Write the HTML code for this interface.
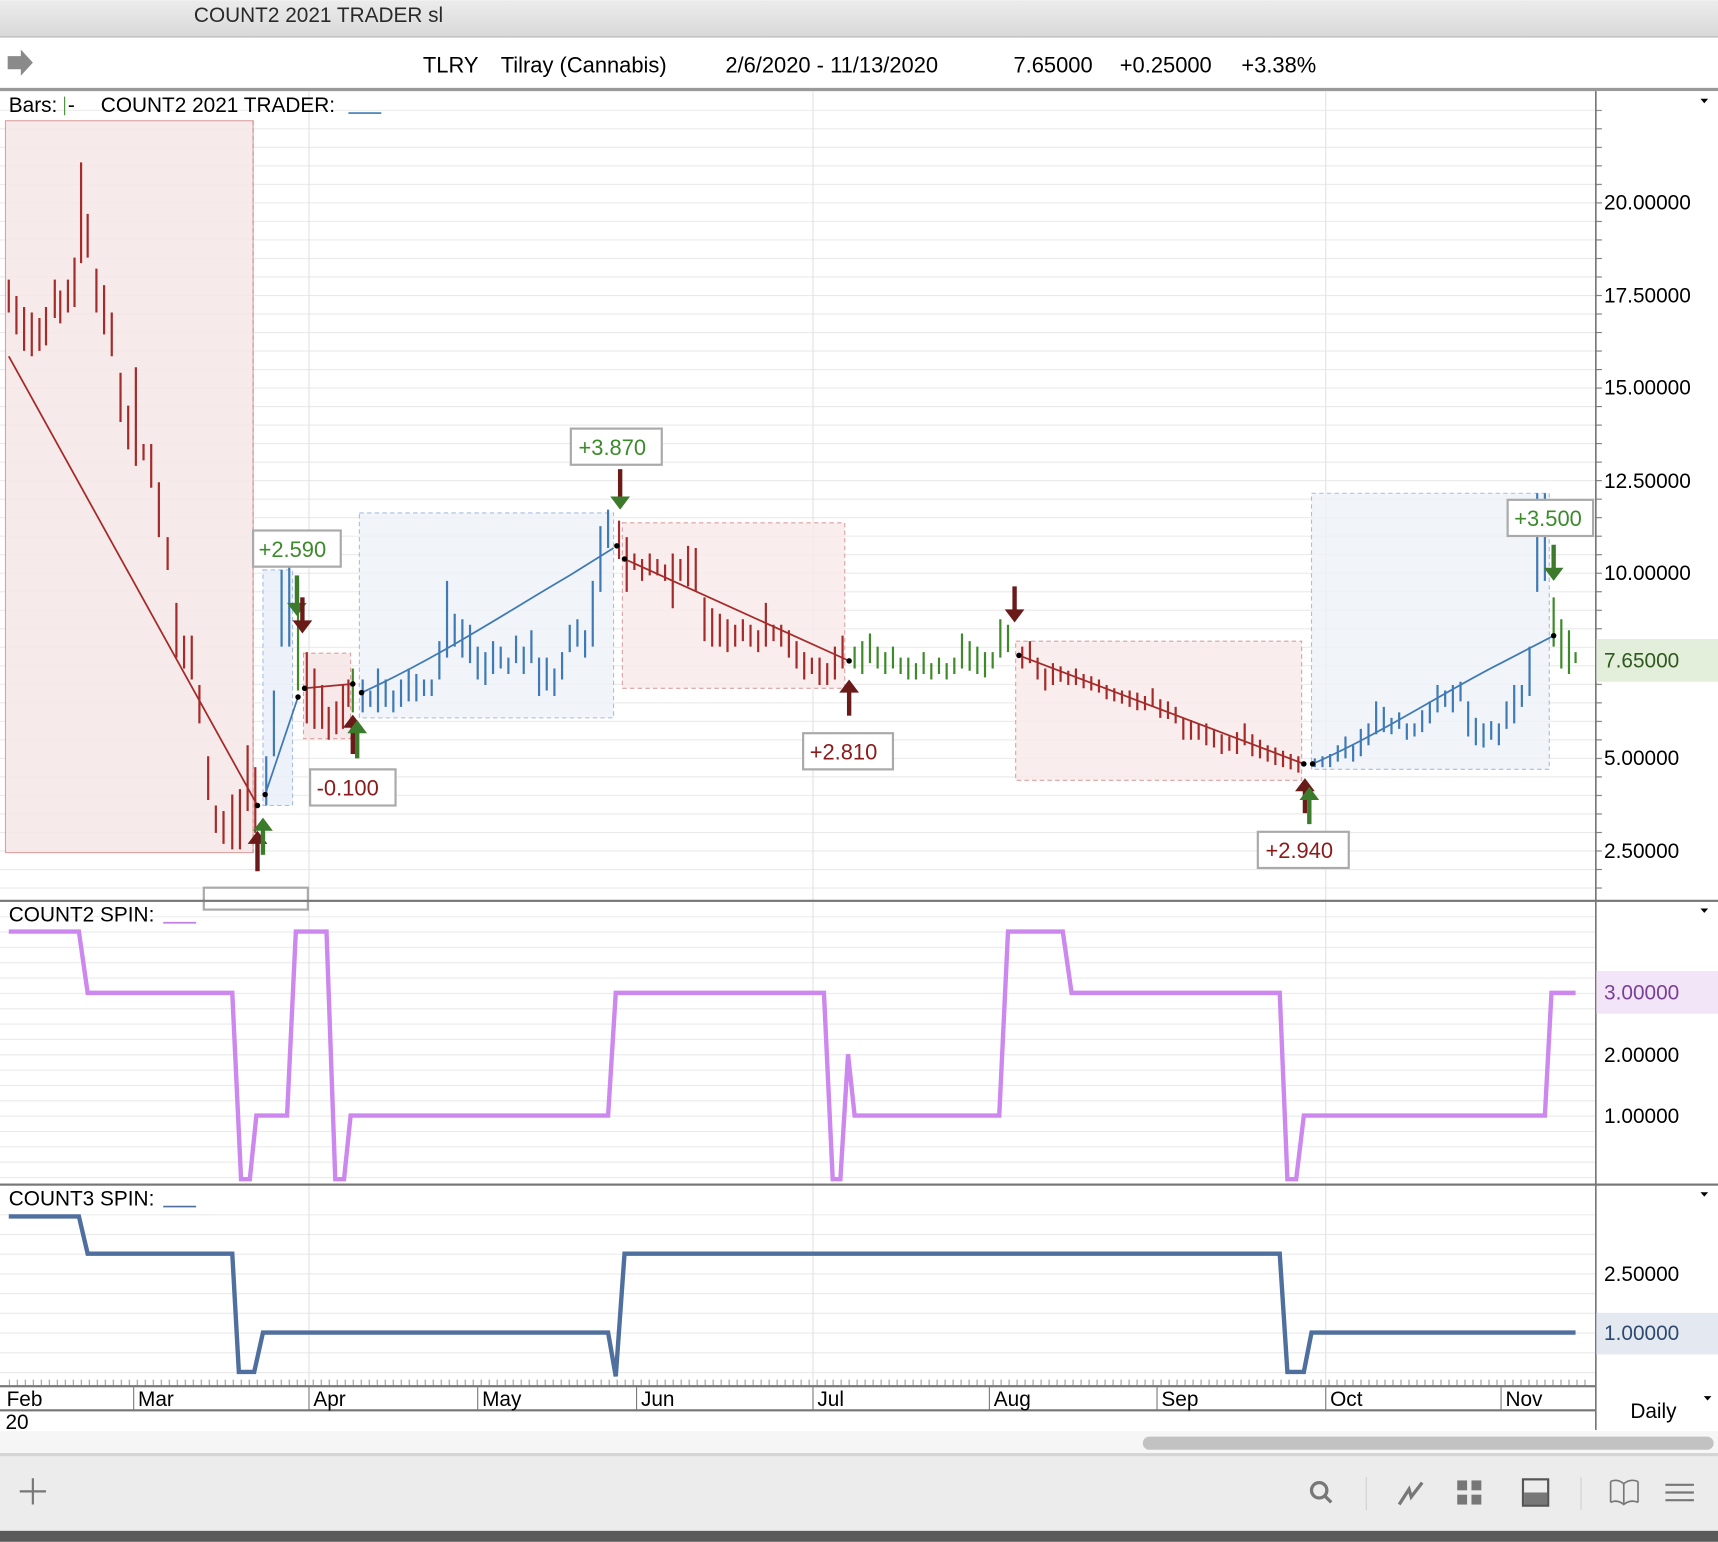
<!DOCTYPE html>
<html><head><meta charset="utf-8"><style>
html,body{margin:0;padding:0;background:#fff;overflow:hidden}
svg{display:block;font-family:"Liberation Sans",Arial,sans-serif}
</style></head><body>
<svg width="1718" height="1542" viewBox="0 0 1568 1407" xmlns="http://www.w3.org/2000/svg">
<defs>
<linearGradient id="tb" x1="0" y1="0" x2="0" y2="1"><stop offset="0" stop-color="#ececec"/><stop offset="1" stop-color="#d9d9d9"/></linearGradient>
<pattern id="g1" x="0" y="100" width="20" height="16.9" patternUnits="userSpaceOnUse"><rect width="20" height="1" fill="#e9e9e9"/></pattern>
<pattern id="g2" x="0" y="836" width="20" height="14" patternUnits="userSpaceOnUse"><rect width="20" height="1" fill="#e9e9e9"/></pattern>
<pattern id="g3" x="0" y="1108" width="20" height="18" patternUnits="userSpaceOnUse"><rect width="20" height="1" fill="#e9e9e9"/></pattern>
<pattern id="t1" x="0" y="100" width="6" height="16.9" patternUnits="userSpaceOnUse"><rect width="6" height="1" fill="#777"/></pattern>
<pattern id="t2" x="8" y="0" width="7.3" height="10" patternUnits="userSpaceOnUse"><rect width="1" height="10" fill="#999"/></pattern>
</defs>
<rect x="0" y="0" width="1568" height="33" fill="url(#tb)"/>
<text x="177" y="20" font-size="19" fill="#2a2a2a">COUNT2 2021 TRADER sl</text>
<line x1="0" y1="33.5" x2="1568" y2="33.5" stroke="#b0b0b0"/>
<path d="M7 51 h12 v-6 l11 12 l-11 12 v-6 h-12z" fill="#8a8a8a"/>
<text y="66" font-size="20" fill="#000"><tspan x="386">TLRY</tspan><tspan x="457">Tilray (Cannabis)</tspan><tspan x="662">2/6/2020 - 11/13/2020</tspan><tspan x="925">7.65000</tspan><tspan x="1022">+0.25000</tspan><tspan x="1133">+3.38%</tspan></text>
<rect x="0" y="80" width="1568" height="3" fill="#999"/>
<rect x="0" y="100" width="1456" height="716" fill="url(#g1)"/>
<rect x="0" y="836" width="1456" height="242" fill="url(#g2)"/>
<rect x="0" y="1108" width="1456" height="155" fill="url(#g3)"/>
<g stroke="#e2e2e2"><line x1="282" y1="83" x2="282" y2="1264"/><line x1="742" y1="83" x2="742" y2="1264"/><line x1="1210" y1="83" x2="1210" y2="1264"/></g>
<g stroke-dasharray="4 3" stroke-width="1">
<rect x="5" y="110" width="226" height="668" fill="#f6e6e6" stroke="#dba0a0" stroke-dasharray="none" fill-opacity="0.85"/>
<line x1="231" y1="110" x2="231" y2="778" stroke="#d08a8a"/>
<rect x="240" y="520" width="27" height="215" fill="#e9eef7" stroke="#a8bde0" fill-opacity="0.8"/>
<rect x="277" y="596" width="43" height="78" fill="#f5e4e4" stroke="#dba0a0" fill-opacity="0.8"/>
<rect x="328" y="468" width="232" height="187" fill="#edf1f8" stroke="#a8bde0" fill-opacity="0.8"/>
<rect x="568" y="477" width="203" height="151" fill="#f7e8e8" stroke="#dba0a0" fill-opacity="0.8"/>
<rect x="927" y="585" width="261" height="127" fill="#f7e8e8" stroke="#dba0a0" fill-opacity="0.8"/>
<rect x="1197" y="450" width="217" height="252" fill="#edf1f8" stroke="#a8bde0" fill-opacity="0.8"/>
</g>
<g fill="none" stroke-width="2">
<path stroke="#a52a2a" d="M8 255V285M15 270V305M22 280V320M29 285V325M36 290V320M42 280V315M50 255V290M55 265V295M62 255V285M68 235V280M74 148V240M80 195V235M88 245V285M95 260V305M102 285V325M110 340V385M117 370V410M124 335V425M131 405V420M138 405V445M145 440V490M153 490V520M161 550V600M168 580V610M175 580V620M182 625V660M190 690V730M197 735V760M204 740V770M212 725V775M219 720V775M226 680V740M233 700V760
M280 595V660M287 610V665M294 625V665M300 645V675M307 640V670M313 625V665M318 620V645
M565 475V510M572 490V540M579 505V520M586 510V530M593 505V525M600 510V525M607 515V530M614 505V555M621 510V530M628 498V535M635 500V540M643 545V585M650 555V590M657 560V590M664 565V595M671 570V590M678 565V585M685 570V590M692 575V595M699 550V590M706 570V585M713 570V590M720 575V600M727 585V610M734 595V620M741 600V615M748 600V625M755 605V625M762 590V620M769 580V610
M933 590V610M940 585V605M947 600V620M954 610V630M961 605V625M968 608V622M975 612V625M982 610V625M989 615V628M996 617V630M1003 620V632M1010 625V638M1017 628V640M1024 630V642M1031 630V645M1038 632V648M1045 635V648M1052 628V645M1059 638V655M1066 640V656M1073 645V660M1080 655V675M1087 657V675M1094 660V675M1101 660V680M1108 665V682M1115 670V688M1122 672V685M1129 668V688M1136 660V680M1143 670V690M1150 675V692M1157 680V695M1164 682V698M1171 685V700M1178 688V702M1185 690V705"/>
<path stroke="#3f7ab5" d="M243 690V735M250 630V690M257 520V590M264 515V590
M331 620V650M338 630V645M345 610V650M352 620V645M359 630V650M366 620V645M373 610V640M380 615V640M387 620V635M394 620V635M401 585V620M408 530V600M415 560V590M422 565V600M429 570V605M436 590V620M443 595V625M450 585V615M457 590V610M464 600V615M471 580V605M478 590V615M485 575V605M492 600V635M499 600V630M506 610V635M513 595V620M520 570V595M527 565V590M534 575V600M541 530V590M548 480V540M555 465V500
M1200 692V700M1207 690V700M1214 688V700M1221 680V695M1228 672V692M1235 680V695M1242 665V690M1249 660V680M1256 640V670M1263 645V668M1270 655V670M1277 650V665M1284 660V675M1291 660V672M1298 648V668M1305 640V660M1312 625V650M1319 630V645M1326 625V650M1333 622V640M1340 640V672M1347 655V680M1354 660V682M1361 658V675M1368 660V680M1375 640V665M1382 625V660M1389 625V645M1396 590V635M1403 450V540M1410 450V530"/>
<path stroke="#3e8a2a" d="M272 530V630M322 610V650
M780 590V610M787 585V615M794 578V605M801 590V610M808 595V615M815 590V610M822 600V615M829 600V620M836 605V620M843 595V615M850 605V620M857 600V615M864 605V620M871 600V615M878 578V610M885 585V612M892 590V615M899 595V618M906 595V610M913 565V600M920 570V595
M1418 545V590M1425 565V610M1432 575V615M1438 595V605"/>
</g>
<g fill="none" stroke-width="1.6">
<path d="M8 325 L235 735" stroke="#a52a2a"/>
<path d="M242 725 L272 636" stroke="#3f7ab5"/>
<path d="M278 628 L322 624" stroke="#a52a2a"/>
<path d="M330 632 C400 600 460 560 520 525 L560 500" stroke="#3f7ab5"/>
<path d="M570 510 L775 603" stroke="#a52a2a"/>
<path d="M930 598 L1190 697" stroke="#a52a2a"/>
<path d="M1198 697 C1260 670 1320 630 1370 605 L1418 580" stroke="#3f7ab5"/>
</g>
<g fill="#000"><circle cx="235" cy="735" r="2.5"/><circle cx="242" cy="725" r="2.5"/><circle cx="272" cy="636" r="2.5"/><circle cx="278" cy="628" r="2.5"/><circle cx="322" cy="624" r="2.5"/><circle cx="330" cy="632" r="2.5"/><circle cx="563" cy="498" r="2.5"/><circle cx="570" cy="510" r="2.5"/><circle cx="775" cy="603" r="2.5"/><circle cx="930" cy="598" r="2.5"/><circle cx="1190" cy="697" r="2.5"/><circle cx="1198" cy="697" r="2.5"/><circle cx="1418" cy="580" r="2.5"/></g>
<g stroke-width="4">
<line x1="566" y1="428" x2="566" y2="455" stroke="#6b1a1a"/><path d="M557 453 H575 L566 465Z" fill="#3c7a2c"/>
<line x1="271" y1="525" x2="271" y2="552" stroke="#3c7a2c"/><path d="M262 550 H280 L271 562Z" fill="#3c7a2c"/>
<line x1="276" y1="545" x2="276" y2="568" stroke="#6b1a1a"/><path d="M267 566 H285 L276 578Z" fill="#6b1a1a"/>
<line x1="926" y1="535" x2="926" y2="558" stroke="#6b1a1a"/><path d="M917 556 H935 L926 568Z" fill="#6b1a1a"/>
<line x1="1418" y1="497" x2="1418" y2="520" stroke="#3c7a2c"/><path d="M1409 518 H1427 L1418 530Z" fill="#3c7a2c"/>
<line x1="235" y1="795" x2="235" y2="768" stroke="#6b1a1a"/><path d="M226 770 H244 L235 758Z" fill="#6b1a1a"/>
<line x1="240" y1="780" x2="240" y2="756" stroke="#3c7a2c"/><path d="M231 758 H249 L240 746Z" fill="#3c7a2c"/>
<line x1="322" y1="688" x2="322" y2="662" stroke="#6b1a1a"/><path d="M313 664 H331 L322 652Z" fill="#6b1a1a"/>
<line x1="326" y1="692" x2="326" y2="667" stroke="#3c7a2c"/><path d="M317 669 H335 L326 657Z" fill="#3c7a2c"/>
<line x1="775" y1="653" x2="775" y2="630" stroke="#6b1a1a"/><path d="M766 632 H784 L775 620Z" fill="#6b1a1a"/>
<line x1="1191" y1="742" x2="1191" y2="720" stroke="#6b1a1a"/><path d="M1182 722 H1200 L1191 710Z" fill="#6b1a1a"/>
<line x1="1195" y1="752" x2="1195" y2="728" stroke="#3c7a2c"/><path d="M1186 730 H1204 L1195 718Z" fill="#3c7a2c"/>
</g>
<g font-size="20">
<rect x="231" y="484" width="80" height="33" fill="#fff" stroke="#aaa" stroke-width="2"/><text x="236" y="508" fill="#3c8a2c">+2.590</text>
<rect x="521" y="391" width="83" height="33" fill="#fff" stroke="#aaa" stroke-width="2"/><text x="528" y="415" fill="#3c8a2c">+3.870</text>
<rect x="283" y="702" width="78" height="33" fill="#fff" stroke="#aaa" stroke-width="2"/><text x="289" y="726" fill="#8b1a1a">-0.100</text>
<rect x="733" y="669" width="82" height="33" fill="#fff" stroke="#aaa" stroke-width="2"/><text x="739" y="693" fill="#8b1a1a">+2.810</text>
<rect x="1148" y="759" width="83" height="33" fill="#fff" stroke="#aaa" stroke-width="2"/><text x="1155" y="783" fill="#8b1a1a">+2.940</text>
<rect x="1376" y="456" width="78" height="33" fill="#fff" stroke="#aaa" stroke-width="2"/><text x="1382" y="480" fill="#3c8a2c">+3.500</text>
<rect x="186" y="810" width="95" height="20" fill="#fff" stroke="#aaa" stroke-width="2"/>
</g>
<text x="8" y="102" font-size="19" fill="#000">Bars:</text><line x1="59" y1="88" x2="59" y2="105" stroke="#3c8a2c"/><text x="62" y="102" font-size="19">-</text>
<text x="92" y="102" font-size="19" fill="#000">COUNT2 2021 TRADER:</text><line x1="318" y1="103" x2="348" y2="103" stroke="#3f7ab5" stroke-width="1.5"/>
<rect x="1457" y="83" width="111" height="1182" fill="#fff"/>
<line x1="1456.5" y1="83" x2="1456.5" y2="1305" stroke="#777" stroke-width="1.5"/>
<rect x="1456" y="100" width="6" height="716" fill="url(#t1)"/>
<g font-size="19" fill="#000">
<text x="1464" y="191">20.00000</text><text x="1464" y="276">17.50000</text><text x="1464" y="360">15.00000</text><text x="1464" y="445">12.50000</text><text x="1464" y="529">10.00000</text><text x="1464" y="698">5.00000</text><text x="1464" y="783">2.50000</text>
</g>
<rect x="1457" y="583" width="111" height="39" fill="#e3eedb"/><text x="1464" y="609" font-size="19" fill="#2e5a1e">7.65000</text>
<path d="M1552 90 h7 l-3.5 4z" fill="#000"/>
<rect x="0" y="821" width="1568" height="2" fill="#777"/>
<rect x="0" y="1080" width="1568" height="2" fill="#777"/>
<text x="8" y="841" font-size="19">COUNT2 SPIN:</text><line x1="149" y1="842" x2="179" y2="842" stroke="#c080e0" stroke-width="1.5"/>
<path d="M1552 829 h7 l-3.5 4z" fill="#000"/>
<path d="M8 850 L72 850 L80 906 L212 906 L220 1076 L228 1076 L234 1018 L262 1018 L270 850 L298 850 L306 1076 L314 1076 L320 1018 L555 1018 L562 906 L752 906 L760 1076 L767 1076 L774 962 L780 1018 L912 1018 L920 850 L970 850 L978 906 L1168 906 L1175 1076 L1183 1076 L1190 1018 L1410 1018 L1416 906 L1438 906" fill="none" stroke="#cc88ee" stroke-width="4"/>
<g font-size="19"><text x="1464" y="969">2.00000</text><text x="1464" y="1025">1.00000</text></g>
<rect x="1457" y="886" width="111" height="39" fill="#f1e5f7"/><text x="1464" y="912" font-size="19" fill="#7a3f96">3.00000</text>
<text x="8" y="1100" font-size="19">COUNT3 SPIN:</text><line x1="149" y1="1101" x2="179" y2="1101" stroke="#4f6f9f" stroke-width="1.5"/>
<path d="M1552 1088 h7 l-3.5 4z" fill="#000"/>
<path d="M8 1110 L72 1110 L80 1144 L212 1144 L218 1252 L232 1252 L240 1216 L555 1216 L562 1256 L570 1144 L1168 1144 L1175 1252 L1190 1252 L1197 1216 L1438 1216" fill="none" stroke="#4f6f9f" stroke-width="4"/>
<text x="1464" y="1169" font-size="19">2.50000</text>
<rect x="1457" y="1198" width="111" height="38" fill="#e4e9f1"/><text x="1464" y="1223" font-size="19" fill="#2e4a6f">1.00000</text>
<rect x="8" y="1259" width="1440" height="5" fill="url(#t2)"/>
<rect x="0" y="1264" width="1456" height="2" fill="#777"/>
<rect x="0" y="1286" width="1456" height="2" fill="#777"/>
<g stroke="#777"><line x1="122" y1="1266" x2="122" y2="1287"/><line x1="282" y1="1266" x2="282" y2="1287"/><line x1="436" y1="1266" x2="436" y2="1287"/><line x1="581" y1="1266" x2="581" y2="1287"/><line x1="742" y1="1266" x2="742" y2="1287"/><line x1="903" y1="1266" x2="903" y2="1287"/><line x1="1056" y1="1266" x2="1056" y2="1287"/><line x1="1210" y1="1266" x2="1210" y2="1287"/><line x1="1370" y1="1266" x2="1370" y2="1287"/></g>
<g font-size="19"><text x="6" y="1283">Feb</text><text x="126" y="1283">Mar</text><text x="286" y="1283">Apr</text><text x="440" y="1283">May</text><text x="585" y="1283">Jun</text><text x="746" y="1283">Jul</text><text x="907" y="1283">Aug</text><text x="1060" y="1283">Sep</text><text x="1214" y="1283">Oct</text><text x="1374" y="1283">Nov</text><text x="5" y="1304">20</text><text x="1488" y="1294">Daily</text></g>
<path d="M1555 1274 h7 l-3.5 4z" fill="#000"/>
<rect x="0" y="1306" width="1568" height="20" fill="#f6f6f6"/>
<rect x="1043" y="1311" width="521" height="12" rx="6" fill="#c2c2c2"/>
<rect x="0" y="1326" width="1568" height="3" fill="#d4d4d4"/>
<rect x="0" y="1329" width="1568" height="69" fill="#ececec"/>
<rect x="0" y="1397" width="1568" height="10" fill="#5a5a5a"/>
<g stroke="#777" fill="none" stroke-width="2">
<path d="M30 1349 v24 M18 1361 h24"/>
<circle cx="1204" cy="1360" r="7" stroke-width="3"/><path d="M1209 1365 l6 6" stroke-width="3"/>
<line x1="1247" y1="1348" x2="1247" y2="1378" stroke="#d0d0d0" stroke-width="1"/>
<path d="M1277 1373 l9 -14 l2 7 l10 -13" stroke-width="3"/>
<line x1="1443" y1="1348" x2="1443" y2="1378" stroke="#d0d0d0" stroke-width="1"/>
<path d="M1470 1352 v19 M1495 1352 v19 M1470 1352 q6 -3 12 2 q6 -5 13 -2 M1482 1354 v19 M1470 1371 q6 -3 12 2 q6 -5 13 -2" stroke-width="1.5"/>
<path d="M1520 1355 h26 M1520 1362 h26 M1520 1369 h26"/>
</g>
<g fill="#777"><rect x="1330" y="1351" width="9" height="9"/><rect x="1343" y="1351" width="9" height="9"/><rect x="1330" y="1364" width="9" height="9"/><rect x="1343" y="1364" width="9" height="9"/>
<rect x="1390" y="1350" width="23" height="24" fill="none" stroke="#555" stroke-width="2"/><rect x="1391" y="1362" width="21" height="11"/></g>
</svg>
</body></html>
